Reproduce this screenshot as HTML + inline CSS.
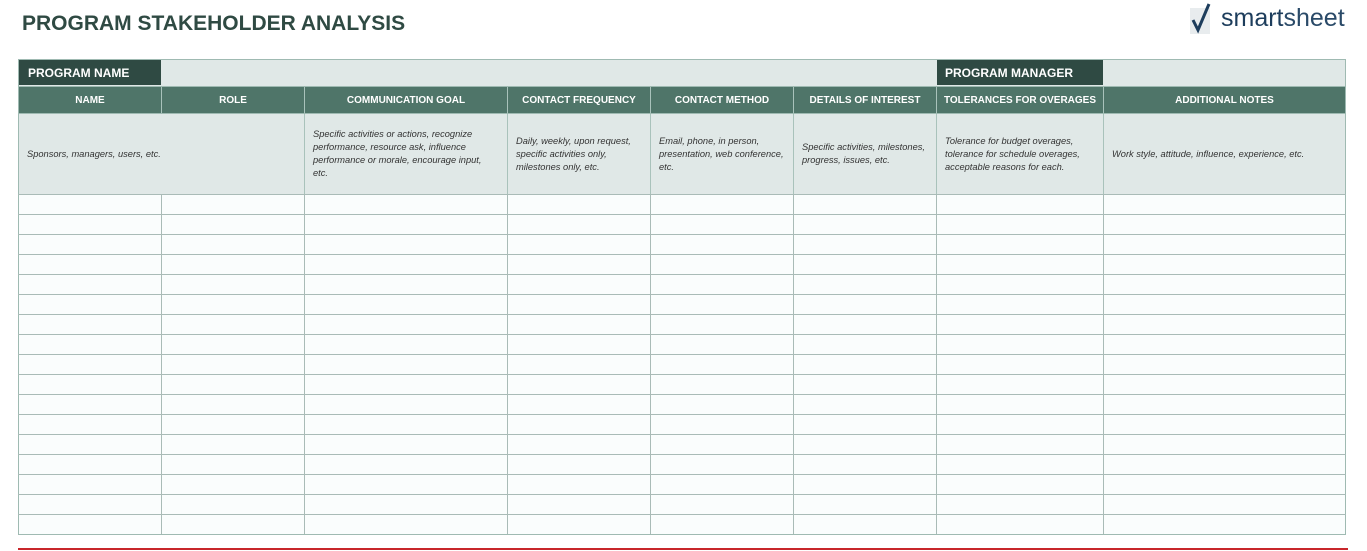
<!DOCTYPE html>
<html><head><style>
body{margin:0;width:1367px;height:551px;background:#fff;position:relative;overflow:hidden;font-family:"Liberation Sans",Arial,sans-serif}
.a{position:absolute;box-sizing:border-box}
h1{position:absolute;left:22px;top:12px;margin:0;font-size:21px;font-weight:bold;color:#2f4a43;letter-spacing:0}
.hd{flex:none;box-sizing:border-box;background:#4f7569;color:#fff;font-size:10px;font-weight:bold;display:flex;align-items:center;justify-content:center;border-right:1px solid #a9c2bb;white-space:nowrap}
.ds{flex:none;box-sizing:border-box;background:#e0e8e7;color:#333;font-size:9.3px;font-style:italic;line-height:13px;padding:0 8px;display:flex;align-items:center;border-right:1px solid #a9c2bb}
.rowl{position:absolute;left:18px;width:1328px;height:1px;background:#a9bbb7}
.coll{position:absolute;top:194px;height:340px;width:1px;background:#a9bbb7}
</style></head><body>
<h1>PROGRAM STAKEHOLDER ANALYSIS</h1>
<div class="a" style="left:1189px;top:2px;width:28px;height:34px">
<svg width="28" height="34" viewBox="0 0 28 34"><rect x="1" y="6" width="20" height="26" fill="#e8ecee"/><path d="M4 18 L9 28 L20 2" stroke="#1d3d5c" stroke-width="3" fill="none"/></svg></div>
<div class="a" style="left:1221px;top:4px;font-size:25px;color:#1d3d5c;letter-spacing:0">smart<span style="color:#2a4a68">sheet</span></div>

<div class="a" style="left:18px;top:59px;width:1328px;height:476px;border:1px solid #9fbab2;background:#fafdfd"></div>
<div class="a" style="left:19px;top:60px;width:1326px;height:26px;background:#e0e8e7"></div>
<div class="a" style="left:19px;top:60px;width:142px;height:25px;background:#2f4a43;color:#fff;font-weight:bold;font-size:12px;padding:6px 0 0 9px">PROGRAM NAME</div>
<div class="a" style="left:937px;top:60px;width:166px;height:25px;background:#2f4a43;color:#fff;font-weight:bold;font-size:12px;padding:6px 0 0 8px">PROGRAM MANAGER</div>

<div class="a" style="left:19px;top:87px;height:26px;width:1326px;display:flex">
<div class="hd" style="width:143px">NAME</div>
<div class="hd" style="width:143px">ROLE</div>
<div class="hd" style="width:203px">COMMUNICATION GOAL</div>
<div class="hd" style="width:143px">CONTACT FREQUENCY</div>
<div class="hd" style="width:143px">CONTACT METHOD</div>
<div class="hd" style="width:143px">DETAILS OF INTEREST</div>
<div class="hd" style="width:167px">TOLERANCES FOR OVERAGES</div>
<div class="hd" style="width:241px;border:0">ADDITIONAL NOTES</div>
</div>
<div class="a" style="left:19px;top:114px;height:80px;width:1326px;display:flex">
<div class="ds" style="width:286px">Sponsors, managers, users, etc.</div>
<div class="ds" style="width:203px">Specific activities or actions, recognize performance, resource ask, influence performance or morale, encourage input, etc.</div>
<div class="ds" style="width:143px">Daily, weekly, upon request, specific activities only, milestones only, etc.</div>
<div class="ds" style="width:143px">Email, phone, in person, presentation, web conference, etc.</div>
<div class="ds" style="width:143px">Specific activities, milestones, progress, issues, etc.</div>
<div class="ds" style="width:167px">Tolerance for budget overages, tolerance for schedule overages, acceptable reasons for each.</div>
<div class="ds" style="width:241px;border:0">Work style, attitude, influence, experience, etc.</div>
</div>
<div class="rowl" style="top:86px;background:#9fbab2"></div>
<div class="rowl" style="top:113px;background:#9fbab2"></div>
<div class="rowl" style="top:194px"></div><div class="rowl" style="top:214px"></div><div class="rowl" style="top:234px"></div><div class="rowl" style="top:254px"></div><div class="rowl" style="top:274px"></div><div class="rowl" style="top:294px"></div><div class="rowl" style="top:314px"></div><div class="rowl" style="top:334px"></div><div class="rowl" style="top:354px"></div><div class="rowl" style="top:374px"></div><div class="rowl" style="top:394px"></div><div class="rowl" style="top:414px"></div><div class="rowl" style="top:434px"></div><div class="rowl" style="top:454px"></div><div class="rowl" style="top:474px"></div><div class="rowl" style="top:494px"></div><div class="rowl" style="top:514px"></div>
<div class="coll" style="left:161px"></div><div class="coll" style="left:304px"></div><div class="coll" style="left:507px"></div><div class="coll" style="left:650px"></div><div class="coll" style="left:793px"></div><div class="coll" style="left:936px"></div><div class="coll" style="left:1103px"></div>
<div class="a" style="left:18px;top:548px;width:1330px;height:2px;background:#c8262b"></div>
</body></html>
